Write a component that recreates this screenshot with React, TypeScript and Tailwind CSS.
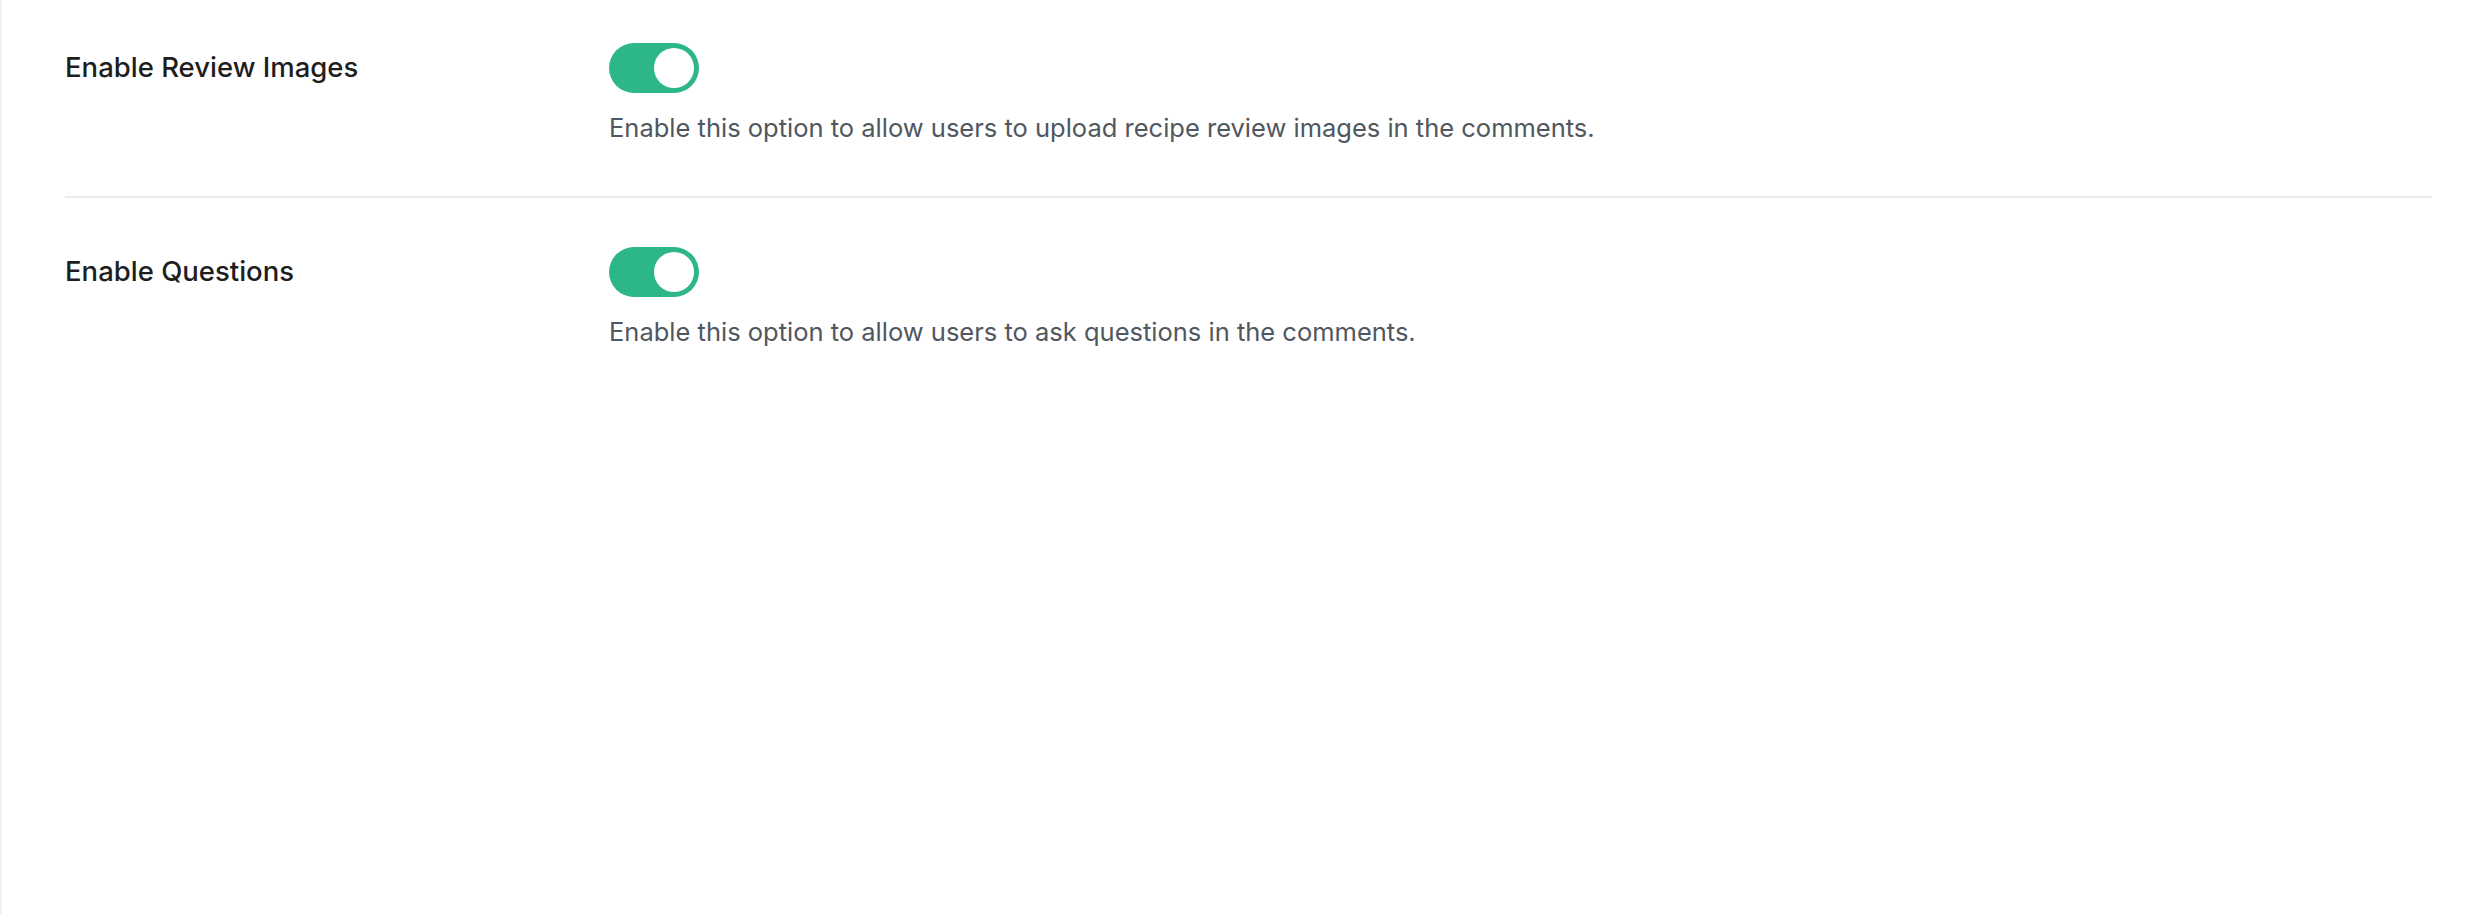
import { useState } from "react";

type Setting = {
  id: string;
  label: string;
  help: string;
};

const settings: Setting[] = [
  {
    id: "review-images",
    label: "Enable Review Images",
    help: "Enable this option to allow users to upload recipe review images in the comments.",
  },
  {
    id: "questions",
    label: "Enable Questions",
    help: "Enable this option to allow users to ask questions in the comments.",
  },
];

function Toggle({ on, onChange }: { on: boolean; onChange: () => void }) {
  return (
    <button
      type="button"
      onClick={onChange}
      className={`flex h-[50px] w-[90px] items-center rounded-full px-[5px] ${
        on ? "justify-end bg-[#2db789]" : "justify-start bg-[#c3c4c7]"
      }`}
    >
      <span className="block h-[40px] w-[40px] rounded-full bg-white" />
    </button>
  );
}

export default function App() {
  const [values, setValues] = useState<Record<string, boolean>>({
    "review-images": true,
    questions: true,
  });

  return (
    <div
      className="min-h-screen border-l-2 border-[#f1f1f1] bg-white pl-[63px] pr-[60px] pt-[43px]"
      style={{ fontFamily: "Inter, 'Noto Sans', sans-serif" }}
    >
      {settings.map((s, i) => (
        <div
          key={s.id}
          className={`flex ${i < settings.length - 1 ? "border-b-2 border-[#ececec] pb-[50px]" : ""} ${
            i > 0 ? "pt-[49px]" : ""
          }`}
        >
          {/* Label */}
          <div className="flex h-[50px] w-[544px] shrink-0 items-center text-[27.5px] font-medium text-[#1e1e1e]">
            {s.label}
          </div>

          {/* Control */}
          <div className="flex flex-col items-start">
            <Toggle
              on={values[s.id]}
              onChange={() => setValues({ ...values, [s.id]: !values[s.id] })}
            />
            <p className="mt-[16px] text-[25.5px] leading-[37px] text-[#50575e]">{s.help}</p>
          </div>
        </div>
      ))}
    </div>
  );
}
